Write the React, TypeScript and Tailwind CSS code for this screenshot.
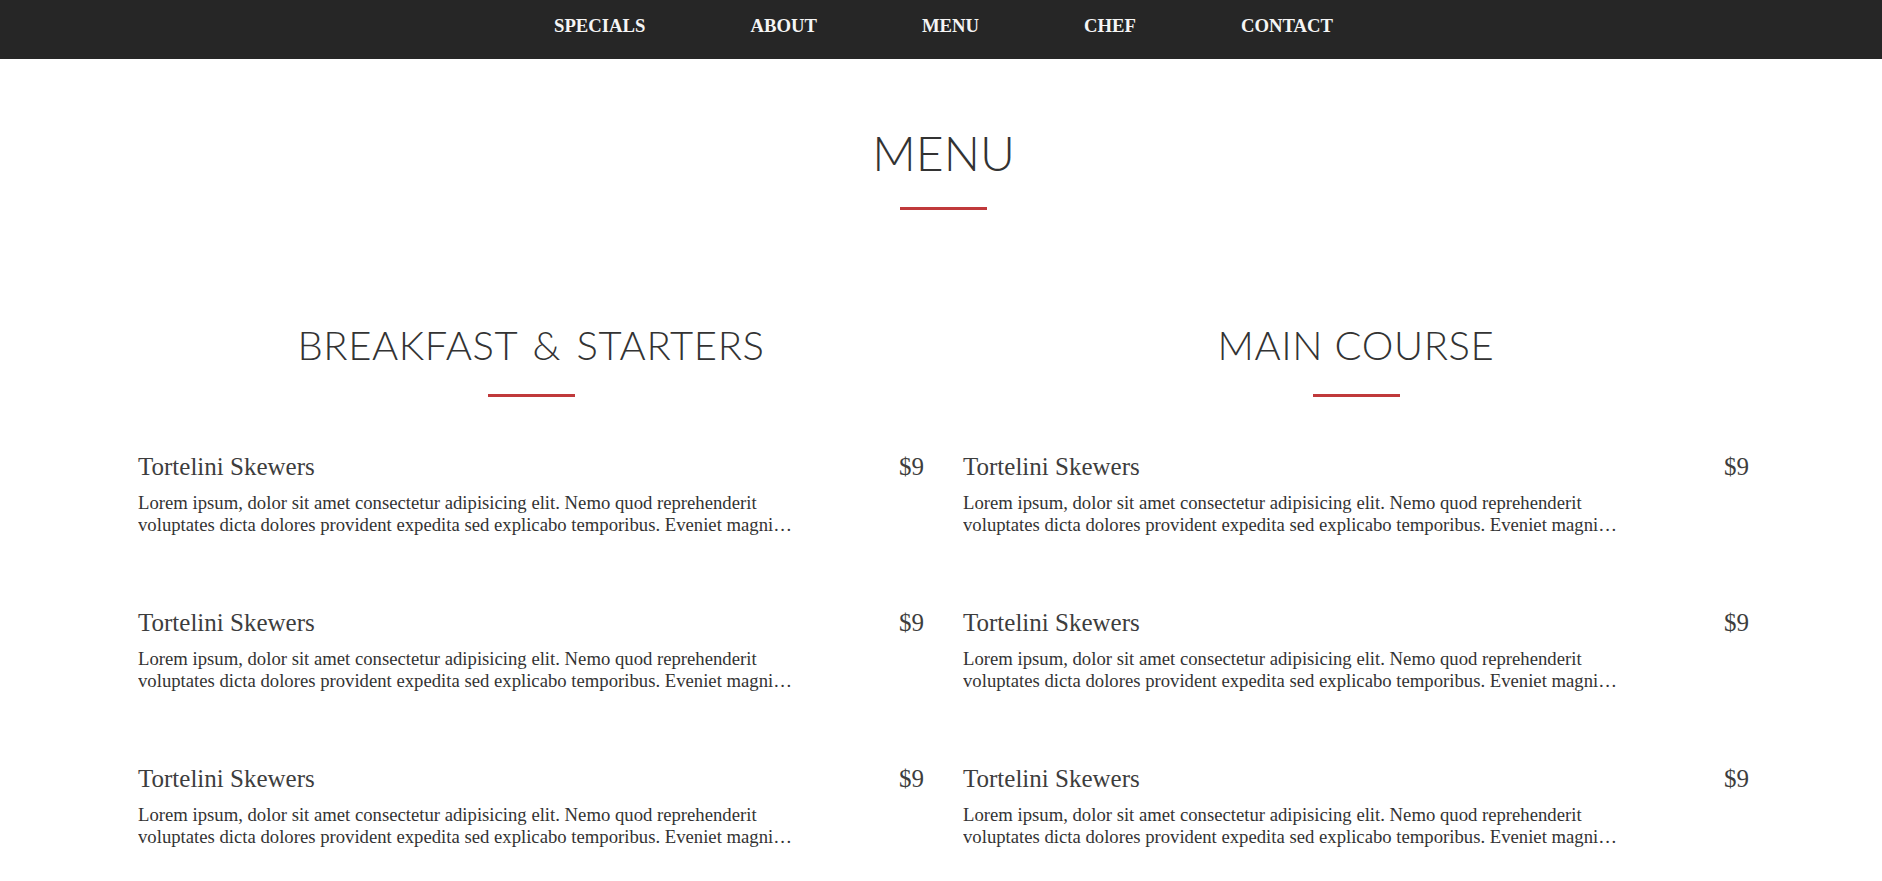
import React from 'react';

const navLinks = ['SPECIALS', 'ABOUT', 'MENU', 'CHEF', 'CONTACT'];

const lorem =
  'Lorem ipsum, dolor sit amet consectetur adipisicing elit. Nemo quod reprehenderit voluptates dicta dolores provident expedita sed explicabo temporibus. Eveniet magnim nesciunt quia iusto odit, velit debitis.';

type Item = { name: string; price: string; desc: string };

const breakfast: Item[] = [
  { name: 'Tortelini Skewers', price: '$9', desc: lorem },
  { name: 'Tortelini Skewers', price: '$9', desc: lorem },
  { name: 'Tortelini Skewers', price: '$9', desc: lorem },
];

const mains: Item[] = [
  { name: 'Tortelini Skewers', price: '$9', desc: lorem },
  { name: 'Tortelini Skewers', price: '$9', desc: lorem },
  { name: 'Tortelini Skewers', price: '$9', desc: lorem },
];

const MenuItem = ({ item }: { item: Item }) => (
  <div className="flex flex-col">
    <div className="flex justify-between items-start text-[25px] leading-[24px] text-[#3d3d3d]">
      <span>{item.name}</span>
      <span>{item.price}</span>
    </div>
    {/* two lines only, rest is cut */}
    <p className="mt-[13px] w-[661px] text-[18.7px] leading-[22px] text-[#333] line-clamp-2">
      {item.desc}
    </p>
  </div>
);

const MenuColumn = ({ title, items, wide }: { title: string; items: Item[]; wide?: boolean }) => (
  <div className="flex flex-col">
    <h2
      className={
        wide
          ? 'text-center text-[40px] leading-[40px] font-light tracking-[0.6px] [word-spacing:4px] text-[#333]'
          : 'text-center text-[40px] leading-[40px] font-light tracking-[0.6px] text-[#333]'
      }
      style={{ fontFamily: 'Lato, "Open Sans", sans-serif' }}
    >
      {title}
    </h2>
    <div className="mx-auto mt-[29px] w-[87px] h-[3px] bg-[#c0393b]" />
    <div className="mt-[58px] flex flex-col gap-[75px]">
      {items.map((item, i) => (
        <MenuItem key={i} item={item} />
      ))}
    </div>
  </div>
);

export default function App() {
  return (
    <div
      className="min-h-screen bg-white overflow-hidden"
      style={{ fontFamily: '"Liberation Serif", "Times New Roman", serif' }}
    >
      <nav className="h-[59px] bg-[#262626] flex items-center justify-center gap-[105px] pl-[5px] pb-[7px]">
        {navLinks.map((link) => (
          <a key={link} href="#" className="text-[#f5f5f5] text-[18.7px] font-bold leading-none">
            {link}
          </a>
        ))}
      </nav>

      <section className="pl-[5px]">
        <h1
          className="mt-[70px] text-center text-[48px] leading-[48px] font-light text-[#333]"
          style={{ fontFamily: 'Lato, "Open Sans", sans-serif' }}
        >
          MENU
        </h1>
        <div className="mx-auto mt-[30px] w-[87px] h-[3px] bg-[#c0393b]" />
      </section>

      <div className="ml-[138px] w-[1611px] mt-[115px] grid grid-cols-2 gap-[39px]">
        <MenuColumn title="BREAKFAST & STARTERS" items={breakfast} wide />
        <MenuColumn title="MAIN COURSE" items={mains} />
      </div>
    </div>
  );
}
